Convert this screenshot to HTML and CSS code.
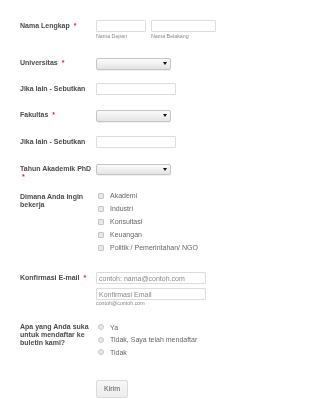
FILE: index.html
```html
<!DOCTYPE html>
<html lang="id">
<head>
<meta charset="utf-8">
<title>Formulir</title>
<link rel="stylesheet" href="styles.css">
</head>
<body>
<form class="form">
  <div class="row row-name">
    <label class="label">Nama Lengkap <span class="req">*</span></label>
    <div class="field name-fields">
      <div class="sub">
        <input class="text w-first" type="text">
        <span class="sublabel">Nama Depan</span>
      </div>
      <div class="sub">
        <input class="text w-last" type="text">
        <span class="sublabel">Nama Belakang</span>
      </div>
    </div>
  </div>

  <div class="row row-gap14">
    <label class="label">Universitas <span class="req">*</span></label>
    <div class="field"><div class="select"><select></select></div></div>
  </div>

  <div class="row row-gap14">
    <label class="label">Jika lain - Sebutkan</label>
    <div class="field"><input class="text w-other" type="text"></div>
  </div>

  <div class="row row-gap15">
    <label class="label">Fakultas <span class="req">*</span></label>
    <div class="field"><div class="select"><select></select></div></div>
  </div>

  <div class="row row-gap15">
    <label class="label">Jika lain - Sebutkan</label>
    <div class="field"><input class="text w-other" type="text"></div>
  </div>

  <div class="row row-year">
    <label class="label">Tahun Akademik PhD <span class="req">*</span></label>
    <div class="field"><div class="select select-short"><select></select></div></div>
  </div>

  <div class="row row-work">
    <label class="label label-list">Dimana Anda ingin bekerja</label>
    <div class="field options checks">
      <label class="option"><span class="box"></span>Akademi</label>
      <label class="option"><span class="box"></span>Industri</label>
      <label class="option"><span class="box"></span>Konsultasi</label>
      <label class="option"><span class="box"></span>Keuangan</label>
      <label class="option"><span class="box"></span>Politik / Pemerintahan/ NGO</label>
    </div>
  </div>

  <div class="row row-email">
    <label class="label">Konfirmasi E-mail <span class="req">*</span></label>
    <div class="field email-fields">
      <input class="text w-email" type="text" placeholder="contoh: nama@contoh.com">
      <input class="text w-email" type="text" placeholder="Konfirmasi Email">
      <span class="sublabel">contoh@contoh.com</span>
    </div>
  </div>

  <div class="row row-news">
    <label class="label">Apa yang Anda suka untuk mendaftar ke buletin kami?</label>
    <div class="field options radios">
      <label class="option"><span class="dot"></span>Ya</label>
      <label class="option"><span class="dot"></span>Tidak, Saya telah mendaftar</label>
      <label class="option"><span class="dot"></span>Tidak</label>
    </div>
  </div>

  <div class="row">
    <div class="label"></div>
    <div class="field"><button class="submit" type="button">Kirim</button></div>
  </div>
</form>
</body>
</html>
```

FILE: styles.css
```css
html, body {
  margin: 0;
  padding: 0;
  background: #fff;
}

body {
  font-family: "Liberation Sans", Arial, sans-serif;
  color: #555;
}

.form {
  padding: 20px 0 0 20px;
  display: flex;
  flex-direction: column;
  will-change: transform;
}

.row {
  display: flex;
  align-items: flex-start;
}

.label {
  width: 76px;
  flex: none;
  padding-top: 2px;
  font-size: 7px;
  line-height: 8px;
  font-weight: bold;
  color: #4a4a4a;
}

.req {
  color: #e22;
  margin-left: 2px;
}

.field {
  display: flex;
  flex-direction: column;
}

/* spacing between rows */
.row-name { margin-bottom: 17px; }
.row-gap14 { margin-bottom: 14px; }
.row-gap15 { margin-bottom: 15px; }
.row-year { margin-bottom: 8px; }
.row-work { margin-bottom: 18px; }
.row-email { margin-bottom: 14px; }
.row-news { margin-bottom: 21px; }

/* text inputs */
.text {
  box-sizing: border-box;
  height: 12px;
  margin: 0;
  padding: 0 2px;
  border: 1px solid #dcdcdc;
  border-radius: 1px;
  background: #fff;
  font-family: "Liberation Sans", Arial, sans-serif;
  font-size: 7px;
  color: #555;
  outline: none;
}

.text::placeholder {
  color: #888;
}

.w-first { width: 50px; }
.w-last { width: 65px; }
.w-other { width: 80px; }
.w-email { width: 110px; }

.name-fields {
  flex-direction: row;
  gap: 5px;
}

.sub {
  display: flex;
  flex-direction: column;
}

.sublabel {
  margin-top: 1px;
  font-size: 5.3px;
  line-height: 7px;
  color: #888;
}

.email-fields {
  gap: 4px;
}

.email-fields .sublabel {
  margin-top: -4px;
}

/* selects */
.select {
  position: relative;
  width: 75px;
  height: 12px;
}

.select-short {
  height: 11px;
}

.select select {
  appearance: none;
  -webkit-appearance: none;
  box-sizing: border-box;
  width: 100%;
  height: 100%;
  margin: 0;
  padding: 0;
  border: 1px solid #c4c4c4;
  border-radius: 2px;
  background: linear-gradient(#fbfbfb, #e4e4e4);
  box-shadow: 0 1px 0 rgba(0, 0, 0, 0.06);
}

.select::after {
  content: "";
  position: absolute;
  right: 4px;
  top: 50%;
  margin-top: -1px;
  border-left: 2px solid transparent;
  border-right: 2px solid transparent;
  border-top: 3px solid #111;
}

/* checkbox / radio lists */
.options {
  padding-left: 2px;
}

.option {
  display: flex;
  align-items: center;
  gap: 6px;
  font-size: 7px;
  color: #666;
}

.checks .option {
  height: 13px;
}

.radios .option {
  height: 12.5px;
}

.label-list {
  padding-top: 3.5px;
}

.box,
.dot {
  box-sizing: border-box;
  width: 6px;
  height: 6px;
  flex: none;
  border: 1px solid #c6c6c6;
  background: #e9e9e9;
}

.box {
  border-radius: 1px;
}

.dot {
  border-radius: 50%;
}

/* submit */
.submit {
  box-sizing: border-box;
  width: 32px;
  height: 18px;
  margin: 0;
  padding: 0;
  border: 1px solid #dadada;
  border-radius: 2px;
  background: linear-gradient(#f7f7f7, #ececec);
  font-family: "Liberation Sans", Arial, sans-serif;
  font-size: 7px;
  color: #555;
}
```
